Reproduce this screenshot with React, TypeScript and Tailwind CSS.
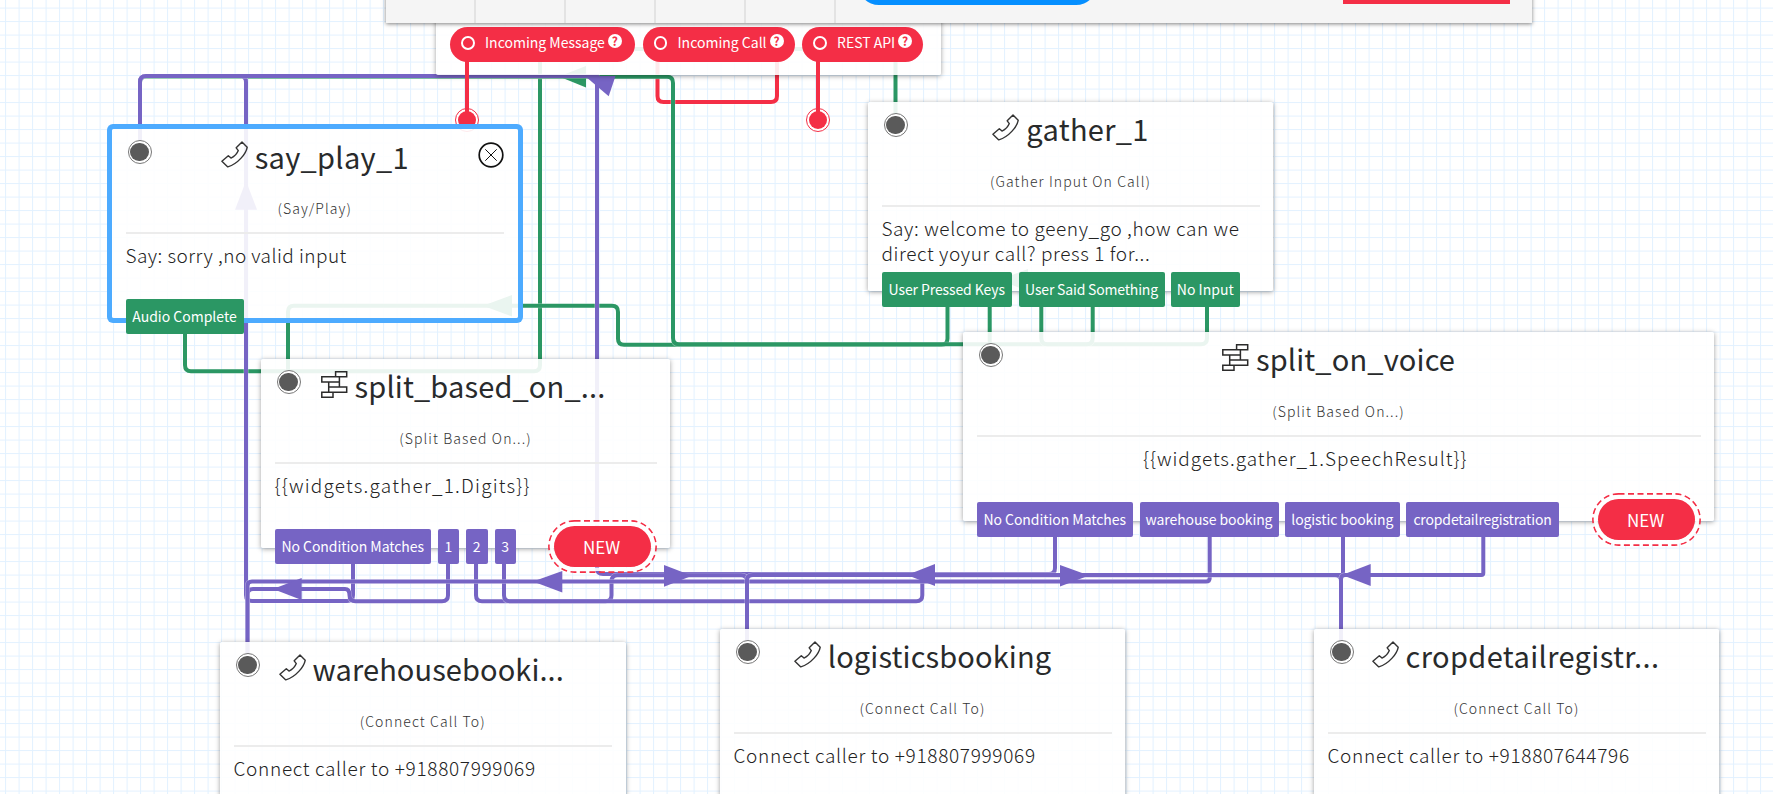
import type { ReactNode } from "react";

const GREEN = "#2b9764";
const PURPLE = "#7664c4";
const RED = "#f42e46";

function PhoneIcon() {
  return (
    <svg className="mt-[12px] size-[27px] shrink-0" viewBox="0 0 27 27" fill="none" stroke="#333" strokeWidth="1.4" strokeLinejoin="round">
      <path d="M21 .9 L26.2 6.3 C25 12.5 17.5 22.5 6.8 25.9 L.9 20.2 L7.3 14.7 L10 17.1 C13 15.7 16.2 12.4 17.3 9.6 L15.2 6.8 Z" />
    </svg>
  );
}

function SplitIcon() {
  return (
    <svg className="mt-[12px] size-[27px] shrink-0" viewBox="0 0 27 27" fill="none" stroke="#2b2b2b" strokeWidth="1.5">
      <path d="M14.6 .8 H25.7 V5.8 H14.6 Z M.8 5.8 H18.4 V11 H.8 Z M7.7 11 H18.4 V16 H7.7 Z M7.7 16 H25.7 V21.2 H7.7 Z M.8 21.2 H12 V26.2 H.8 Z" />
    </svg>
  );
}

function Dot({ color = "bg-[#5a5a5a]", ring = "border-[#777]" }: { color?: string; ring?: string }) {
  return (
    <span className={`flex size-[24px] items-center justify-center rounded-full border bg-white ${ring}`}>
      <span className={`size-[18.5px] rounded-full ${color}`} />
    </span>
  );
}

function Tag({ className, children }: { className: string; children: ReactNode }) {
  return (
    <span className={`flex h-[35px] shrink-0 items-center justify-center rounded-[2px] pb-px text-[14px] leading-none whitespace-nowrap text-white ${className}`}>
      {children}
    </span>
  );
}

function NewPill() {
  return (
    <span className="relative flex h-[41px] w-[97px] items-center justify-center rounded-full bg-[#f42e46] pr-px pb-px text-[17px] leading-none text-white">
      <svg className="absolute -top-[6px] -left-[6px] h-[53px] w-[109px]" viewBox="0 0 109 53" fill="none">
        <rect x=".9" y=".9" width="107.2" height="51.2" rx="25.6" stroke="#f42e46" strokeWidth="1.6" strokeDasharray="6 3.5" />
        <rect x="3.7" y="3.7" width="101.6" height="45.6" rx="22.8" stroke="#fff" strokeWidth="3.6" opacity=".9" />
      </svg>
      NEW
    </span>
  );
}

interface NodeProps {
  place: string;
  title: string;
  titleClass?: string;
  icon: ReactNode;
  kind: string;
  body: ReactNode;
  bodyClass: string;
  selected?: boolean;
  children?: ReactNode;
}

function Node({ place, title, titleClass = "", icon, kind, body, bodyClass, selected, children }: NodeProps) {
  return (
    <section
      className={`absolute flex h-[189px] flex-col rounded-[2px] bg-white/90 px-[13.5px] ${place} ${
        selected ? "shadow-[0_0_0_5px_#4dabff]" : "shadow-[0_1px_5px_rgba(0,0,0,0.38)]"
      }`}
    >
      <span className="absolute top-[11px] left-[15.5px]">
        <Dot />
      </span>
      {selected && (
        <svg className="absolute top-[13px] right-[14px] size-[26px]" viewBox="0 0 26 26" fill="none" stroke="#111">
          <circle cx="13" cy="13" r="11.8" strokeWidth="1.7" fill="#fff" />
          <path d="M7.3 7.3 L18.7 18.7 M18.7 7.3 L7.3 18.7" strokeWidth="1" />
        </svg>
      )}
      <header className="flex h-[53px] shrink-0 items-start justify-center gap-[7px]">
        {icon}
        <h2 className={`text-[29px] leading-[53px] font-normal whitespace-nowrap text-[#282a2b] ${titleClass}`}>{title}</h2>
      </header>
      <p className="flex h-[50px] shrink-0 items-center justify-center pt-[2px] text-[14px] leading-none font-light tracking-[1.1px] whitespace-nowrap text-[#333]">
        {kind}
      </p>
      <div className="h-[2px] shrink-0 bg-[#ececec]" />
      <div className={`h-[65px] shrink-0 pt-[8px] text-[19px] leading-[25px] font-light whitespace-nowrap text-[#222] ${bodyClass}`}>{body}</div>
      <div className="flex h-[35px] shrink-0 items-center justify-between">{children}</div>
    </section>
  );
}

function Wire({ d, color }: { d: string; color: string }) {
  return (
    <g fill="none">
      <path d={d} stroke="#fff" strokeWidth="5" opacity=".45" />
      <path d={d} stroke={color} strokeWidth="4" />
    </g>
  );
}

function Connections() {
  return (
    <svg className="absolute inset-0 h-[794px] w-[1773px]" viewBox="0 0 1773 794">
      <defs>
        <pattern id="grid" width="13.5" height="13.5" patternUnits="userSpaceOnUse" x="5.1" y="7.6">
          <path d="M.5 0 V13.5 M0 .5 H13.5" stroke="#e2f1ff" strokeWidth="1" />
        </pattern>
      </defs>
      <rect width="1773" height="794" fill="#fff" />
      <rect width="1773" height="794" fill="url(#grid)" />

      <Wire color={RED} d="M657.5 50 V96 Q657.5 102 663.5 102 H771 Q777 102 777 96 V50" />

      <Wire color={GREEN} d="M185 330 V365 Q185 371.3 191 371.3 H534 Q540 371.3 540 365 V49 H895.5 V125" />
      <Wire color={GREEN} d="M947.5 300 V338.5 Q947.5 344.7 941.5 344.7 H624 Q618 344.7 618 338.7 V312 Q618 305.8 612 305.8 H294 Q288 305.8 288 312 V382" />
      <Wire color={GREEN} d="M1207 300 V338 Q1207 344.2 1201 344.2 H679 Q673 344.2 673 338 V83 Q673 76.8 667 76.8 H146 Q140 76.8 140 83 V152" />
      <Wire color={GREEN} d="M1092.7 300 V338 Q1092.7 344.2 1086.7 344.2 H1047.3 Q1041.3 344.2 1041.3 338 V280 H989.7 V355" />
      <g fill={GREEN}>
        <path d="M559 76.5 L586 66 V87.5 Z" />
        <path d="M483 305.8 L512 295 V316.5 Z" />
        <path d="M999 280 L1028 269 V291 Z" />
      </g>

      <Wire color={PURPLE} d="M353 560 V595 Q353 601 347 601 H252 Q246 601 246 595 V82 Q246 76 240 76 H146 Q140 76 140 82 V152" />
      <Wire color={PURPLE} d="M1055 530 V568 Q1055 574 1049 574 H603 Q597 574 597 568 V76 H146 Q140 76 140 82 V152" />
      <Wire color={PURPLE} d="M448 560 V595.3 Q448 601.3 442 601.3 H355.5 Q349.5 601.3 349.5 595.3 Q349.5 589 345 589 H253 Q247.5 589 247.5 595 V665" />
      <Wire color={PURPLE} d="M476 560 V595.3 Q476 601.3 482 601.3 H605.5 Q611.5 601.3 611.5 595.3 V581.5 Q611.5 575.3 617.5 575.3 H741 Q747 575.3 747 581 V652" />
      <Wire color={PURPLE} d="M504 560 V595.3 Q504 601.3 510 601.3 H916.3 Q922.3 601.3 922.3 595.3 V575.3 H1335 Q1341 575.3 1341 581 V652" />
      <Wire color={PURPLE} d="M1209.7 530 V578 Q1209.7 581.6 1206 581.6 H252 Q247.5 581.6 247.5 586 V665" />
      <Wire color={PURPLE} d="M1343 530 V575 H753 Q747 575 747 580 V652" />
      <Wire color={PURPLE} d="M1483.3 530 V573 Q1483.3 575 1481.3 575 H1345 Q1341 575 1341 579 V652" />
      <g fill={PURPLE}>
        <path d="M246 181 L235 209.7 H257 Z" />
        <path d="M585 76 H615.5 L608.7 96.3 Z" />
        <path d="M273 589 L301.7 578 V600 Z" />
        <path d="M533 581.6 L562.3 571 V592.5 Z" />
        <path d="M692 575.8 L664 565 V586.7 Z" />
        <path d="M907 575 L935 564 V586 Z" />
        <path d="M1089 575.5 L1060 565 V586.5 Z" />
        <path d="M1342 575 L1370.7 564 V586 Z" />
      </g>
    </svg>
  );
}

function Trigger({ width, label }: { width: string; label: string }) {
  return (
    <span className={`flex h-[35px] items-center rounded-full bg-[#f42e46] pl-[11px] text-white ${width}`}>
      <span className="mb-[3px] h-[14px] w-[13.5px] rounded-full border-2 border-white" />
      <span className="ml-[10.5px] pb-[4px] text-[14px] leading-none whitespace-nowrap">{label}</span>
      <span className="mb-[6px] ml-[3px] flex size-[14px] items-center justify-center rounded-full bg-white text-[12px] leading-none font-bold text-[#f42e46]">
        ?
      </span>
    </span>
  );
}

export default function App() {
  return (
    <main className="relative h-[794px] w-[1773px] overflow-hidden bg-white font-['Noto_Sans_CJK_SC','Noto_Sans',sans-serif]">
      <Connections />

      <div className="absolute top-[-20px] left-[436px] flex h-[95px] w-[505px] items-start gap-[7.5px] rounded-[2px] bg-white/90 pt-[46.5px] pl-[14px] shadow-[0_1px_5px_rgba(0,0,0,0.38)]">
        <Trigger width="w-[185px]" label="Incoming Message" />
        <Trigger width="w-[152px]" label="Incoming Call" />
        <Trigger width="w-[121px]" label="REST API" />
      </div>

      <div className="absolute top-[108px] left-[455px]">
        <Dot color="bg-[#f42e46]" ring="border-[#f42e46]" />
      </div>
      <div className="absolute top-[108px] left-[806px]">
        <Dot color="bg-[#f42e46]" ring="border-[#f42e46]" />
      </div>
      <div className="absolute top-[60px] left-[465px] h-[56px] w-[4px] bg-[#f42e46]" />
      <div className="absolute top-[60px] left-[816px] h-[56px] w-[4px] bg-[#f42e46]" />

      <div className="absolute top-[-60px] left-[386px] flex h-[83px] w-[1146px] bg-[#f5f5f5] shadow-[0_1px_4px_rgba(0,0,0,0.5)]">
        <div className="flex">
          <div className="w-[90px] border-r-2 border-[#e3e3e3]" />
          <div className="w-[90px] border-r-2 border-[#e3e3e3]" />
          <div className="w-[90px] border-r-2 border-[#e3e3e3]" />
          <div className="w-[90px] border-r-2 border-[#e3e3e3]" />
          <div className="w-[90px] border-r-2 border-[#e3e3e3]" />
        </div>
        <div className="mt-[23px] ml-[22px] h-[42px] w-[239px] rounded-full bg-[#058fff]" />
        <div className="mt-[23px] mr-[22px] ml-auto h-[41px] w-[167px] bg-[#f42e46]" />
      </div>

      <Node
        place="left-[112px] top-[129px] w-[405.5px]"
        selected
        title="say_play_1"
        titleClass="pt-px tracking-[0.3px]"
        icon={<PhoneIcon />}
        kind="(Say/Play)"
        body="Say: sorry ,no valid input"
        bodyClass="tracking-[0.46px]"
      >
        <Tag className="relative w-[118px] bg-[#2b9764]">Audio Complete</Tag>
      </Node>

      <Node
        place="left-[868px] top-[102px] w-[405px]"
        title="gather_1"
        titleClass="tracking-[0.3px]"
        icon={<PhoneIcon />}
        kind="(Gather Input On Call)"
        body={
          <>
            Say: welcome to geeny_go ,how can we
            <br />
            direct yoyur call? press 1 for...
          </>
        }
        bodyClass="tracking-[0.6px]"
      >
        <div className="flex gap-[6.5px]">
          <Tag className="w-[130.5px] bg-[#2b9764] tracking-[-0.1px]">User Pressed Keys</Tag>
          <Tag className="w-[146px] bg-[#2b9764] tracking-[-0.18px]">User Said Something</Tag>
          <Tag className="w-[68.5px] bg-[#2b9764]">No Input</Tag>
        </div>
      </Node>

      <Node
        place="left-[261px] top-[359px] w-[409px]"
        title="split_based_on_..."
        titleClass="mr-[5px] tracking-[0.15px]"
        icon={<SplitIcon />}
        kind="(Split Based On...)"
        body="{{widgets.gather_1.Digits}}"
        bodyClass="tracking-[1.22px]"
      >
        <div className="flex gap-[7px]">
          <Tag className="w-[156.5px] bg-[#7664c4] tracking-[-0.05px]">No Condition Matches</Tag>
          <Tag className="w-[21px] bg-[#7664c4]">1</Tag>
          <Tag className="w-[21.5px] bg-[#7664c4]">2</Tag>
          <Tag className="w-[21.5px] bg-[#7664c4]">3</Tag>
        </div>
        <div className="mr-[6px]">
          <NewPill />
        </div>
      </Node>

      <Node
        place="left-[963px] top-[332px] w-[751px]"
        title="split_on_voice"
        titleClass="tracking-[0.15px]"
        icon={<SplitIcon />}
        kind="(Split Based On...)"
        body="{{widgets.gather_1.SpeechResult}}"
        bodyClass="pl-[166.5px] tracking-[0.98px]"
      >
        <div className="flex gap-[6.5px]">
          <Tag className="w-[156.5px] bg-[#7664c4] tracking-[-0.05px]">No Condition Matches</Tag>
          <Tag className="w-[139px] bg-[#7664c4] tracking-[-0.1px]">warehouse booking</Tag>
          <Tag className="w-[114.5px] bg-[#7664c4] tracking-[-0.1px]">logistic booking</Tag>
          <Tag className="w-[153px] bg-[#7664c4] tracking-[-0.15px]">cropdetailregistration</Tag>
        </div>
        <div className="mr-[6px]">
          <NewPill />
        </div>
      </Node>

      <Node
        place="left-[220px] top-[642px] w-[405.5px]"
        title="warehousebooki..."
        titleClass="mr-[3px] tracking-[0.08px]"
        icon={<PhoneIcon />}
        kind="(Connect Call To)"
        body="Connect caller to +918807999069"
        bodyClass="tracking-[0.68px]"
      />
      <Node
        place="left-[720px] top-[629px] w-[405px]"
        title="logisticsbooking"
        titleClass="tracking-[0.12px]"
        icon={<PhoneIcon />}
        kind="(Connect Call To)"
        body="Connect caller to +918807999069"
        bodyClass="tracking-[0.68px]"
      />
      <Node
        place="left-[1314px] top-[629px] w-[405px]"
        title="cropdetailregistr..."
        titleClass="mr-[2px] tracking-[0.38px]"
        icon={<PhoneIcon />}
        kind="(Connect Call To)"
        body="Connect caller to +918807644796"
        bodyClass="tracking-[0.68px]"
      />
    </main>
  );
}
